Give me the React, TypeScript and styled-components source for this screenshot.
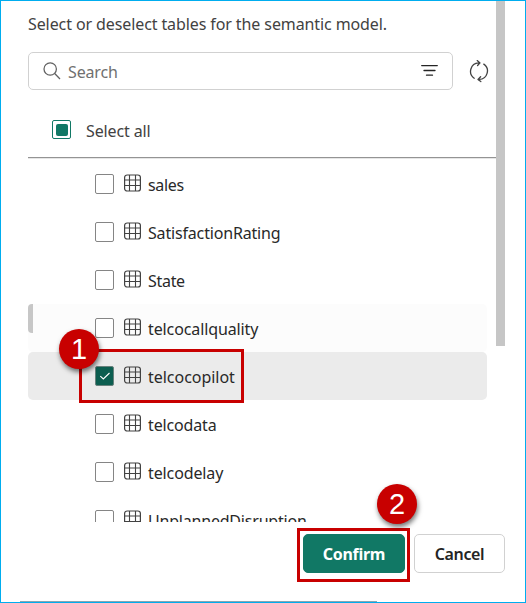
import React from 'react';
import styled, { createGlobalStyle } from 'styled-components';

const GlobalStyle = createGlobalStyle`
  *, *::before, *::after { box-sizing: border-box; }
  body {
    margin: 0;
    background: #fff;
    color: #292929;
    font-family: "Noto Sans", "Open Sans", sans-serif;
    font-size: 16px;
  }
  svg { display: block; flex: none; }
`;

const Dialog = styled.div`
  position: relative;
  display: flex;
  flex-direction: column;
  width: 526px;
  height: 603px;
  border: 1px solid #00adef;
  padding-left: 27px;
  overflow: hidden;
`;

const ScrollPane = styled.div`
  display: flex;
  width: 477px;
  height: 521px;
  flex: none;
  overflow: hidden;
`;

const Content = styled.div`
  width: 468px;
  flex: none;
`;

const ScrollThumb = styled.div`
  width: 9px;
  height: 345px;
  background: #c6c6c6;
`;

const Label = styled.span<{ $track?: number }>`
  letter-spacing: ${(p) => p.$track ?? 0}px;
  white-space: nowrap;
  line-height: 24px;
`;

const Intro = styled.div`
  height: 51px;
  padding-top: 11px;
  color: #424242;
`;

const SearchRow = styled.div`
  display: flex;
  align-items: center;
  gap: 16px;
  height: 38px;
`;

const SearchBox = styled.div`
  display: flex;
  align-items: center;
  width: 425px;
  height: 38px;
  padding: 0 14px;
  border: 1px solid #d1d1d1;
  border-radius: 5px;
  color: #707070;
`;

const SearchText = styled(Label)`
  flex: 1;
  margin: 2px 0 0 7px;
`;

const SelectAllRow = styled.div`
  display: flex;
  align-items: center;
  gap: 15px;
  height: 68px;
  margin-bottom: 2px;
  padding: 15px 0 0 24px;
  border-bottom: 1px solid #949494;
  box-shadow: 0 1px 0 #e6e6e6;
  color: #424242;
`;

const MixedCheckbox = styled.span`
  display: grid;
  place-items: center;
  width: 19px;
  height: 19px;
  margin-top: -3px;
  border: 1px solid #117865;
  border-radius: 2px;
  &::after {
    content: "";
    width: 12px;
    height: 12px;
    border-radius: 2px;
    background: #117865;
  }
`;

type RowState = 'plain' | 'hover' | 'selected';
const rowColors = { plain: 'transparent', hover: '#fcfcfc', selected: '#ebebeb' };

const TableRow = styled.div<{ $state: RowState }>`
  position: relative;
  display: flex;
  align-items: center;
  width: 459px;
  height: 48px;
  padding-left: 67px;
  border-radius: 5px;
  background: ${(p) => rowColors[p.$state]};
`;

const HoverMark = styled.span`
  position: absolute;
  left: 0;
  top: 0;
  width: 5px;
  height: 29px;
  border-radius: 4px 0 0 4px;
  background: #c7c7c7;
`;

const Checkbox = styled.span<{ $checked: boolean }>`
  display: grid;
  place-items: center;
  width: 19px;
  height: 20px;
  margin-right: 10px;
  border: 1px solid ${(p) => (p.$checked ? '#68817c' : '#858585')};
  border-radius: 2px;
  background: ${(p) => (p.$checked ? '#0c5e50' : '#fff')};
`;

const GridIcon = styled.svg`
  margin: -3px 7px 0 0;
`;

const RowLabel = styled(Label)`
  margin-top: 2px;
`;

const Footer = styled.div`
  display: flex;
  gap: 9px;
  padding: 12px 0 0 275px;
`;

const Button = styled.button<{ $primary?: boolean }>`
  width: ${(p) => (p.$primary ? 102 : 91)}px;
  height: 39px;
  padding: 0;
  border: 1px solid ${(p) => (p.$primary ? '#117865' : '#d1d1d1')};
  border-radius: 5px;
  background: ${(p) => (p.$primary ? '#117865' : '#fff')};
  color: ${(p) => (p.$primary ? '#fff' : '#242424')};
  font: ${(p) => (p.$primary ? 700 : 600)} 16px "Noto Sans", sans-serif;
  letter-spacing: ${(p) => (p.$primary ? -0.3 : -0.35)}px;
`;

const Callout = styled.div<{ $x: number; $y: number; $w: number; $h: number }>`
  position: absolute;
  left: ${(p) => p.$x}px;
  top: ${(p) => p.$y}px;
  width: ${(p) => p.$w}px;
  height: ${(p) => p.$h}px;
  border: 3px solid #c80000;
  pointer-events: none;
`;

const Step = styled.div<{ $x: number; $y: number }>`
  position: absolute;
  left: ${(p) => p.$x}px;
  top: ${(p) => p.$y}px;
  width: 40px;
  height: 40px;
  border-radius: 50%;
  background: #c80000;
  box-shadow: 1px 3px 5px rgba(0, 0, 0, 0.55);
  color: #fff;
  font: 29px/41px "Liberation Sans", Arial, sans-serif;
  text-align: center;
`;

const BottomEdge = styled.div`
  position: absolute;
  left: 19px;
  bottom: 0;
  width: 357px;
  height: 1px;
  background: #8aa5b0;
`;

const TableIcon = () => (
  <GridIcon width="17" height="18" viewBox="0 0 17 18" fill="none" stroke="#424242">
    <rect x="0.6" y="1" width="15.8" height="16" rx="2.6" strokeWidth="1.2" />
    <path d="M5.5 1v16M11.5 1v16M.5 6h16M.5 11.5h16" strokeWidth="1.1" />
  </GridIcon>
);

const tables: { name: string; track: number; state: RowState }[] = [
  { name: 'sales', track: -0.35, state: 'plain' },
  { name: 'SatisfactionRating', track: -0.17, state: 'plain' },
  { name: 'State', track: -0.3, state: 'plain' },
  { name: 'telcocallquality', track: -0.11, state: 'hover' },
  { name: 'telcocopilot', track: -0.03, state: 'selected' },
  { name: 'telcodata', track: -0.15, state: 'plain' },
  { name: 'telcodelay', track: -0.12, state: 'plain' },
  { name: 'UnplannedDisruption', track: -0.2, state: 'plain' },
];

export default function App() {
  return (
    <>
      <GlobalStyle />
      <Dialog>
        <ScrollPane>
          <Content>
            <Intro><Label $track={-0.1}>Select or deselect tables for the semantic model.</Label></Intro>
            <SearchRow>
              <SearchBox>
                <svg width="18" height="18" viewBox="0 0 18 18" fill="none" stroke="#616161" strokeWidth="1.25">
                  <circle cx="7.2" cy="7" r="6.2" />
                  <path d="M11.7 11.5 17 17" />
                </svg>
                <SearchText $track={-0.15}>Search</SearchText>
                <svg width="17" height="14" viewBox="0 0 17 14" fill="none" stroke="#242424" strokeWidth="1.3" strokeLinecap="round">
                  <path d="M.7 1.6h15.6M3 6.5h11M5.5 11.2h6" />
                </svg>
              </SearchBox>
              <svg width="20" height="24" viewBox="0 0 20 24" fill="none" stroke="#424242" strokeWidth="1.3" strokeLinecap="round" strokeLinejoin="round">
                <path d="M5.2 19.2A8.4 8.4 0 0 1 9.6 3.9M14.8 5.1A8.4 8.4 0 0 1 10.3 20.4M8.2 1.6 11 3.9 8.6 6.5M11.6 17.8 9 20.4l2.8 2.2" />
              </svg>
            </SearchRow>
            <SelectAllRow>
              <MixedCheckbox />
              <Label $track={-0.13}>Select all</Label>
            </SelectAllRow>
            {tables.map(({ name, track, state }) => (
              <TableRow key={name} $state={state}>
                {state === 'hover' && <HoverMark />}
                <Checkbox $checked={state === 'selected'}>
                  {state === 'selected' && (
                    <svg width="12" height="10" viewBox="0 0 12 10" fill="none" stroke="#fff" strokeWidth="1.1">
                      <path d="m1.3 5.2 3 2.8 6.2-6" />
                    </svg>
                  )}
                </Checkbox>
                <TableIcon />
                <RowLabel $track={track}>{name}</RowLabel>
              </TableRow>
            ))}
          </Content>
          <ScrollThumb />
        </ScrollPane>
        <Footer>
          <Button $primary>Confirm</Button>
          <Button>Cancel</Button>
        </Footer>
        <BottomEdge />
        <Callout $x={78} $y={348} $w={165} $h={54} />
        <Callout $x={296} $y={527} $w={113} $h={54} />
        <Step $x={58} $y={328}>1</Step>
        <Step $x={376} $y={483}>2</Step>
      </Dialog>
    </>
  );
}
